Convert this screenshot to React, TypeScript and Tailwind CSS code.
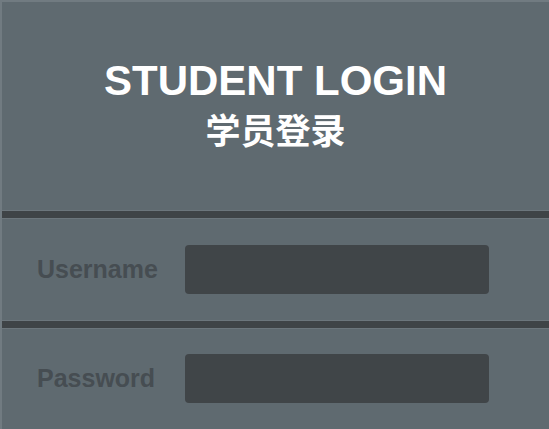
import { FC } from 'react';

const Divider: FC = () => (
  <div className="h-[9px] border-y border-[#6c767c] bg-[#3f4447]" />
);

interface FieldProps {
  label: string;
  type: string;
}

const Field: FC<FieldProps> = ({ label, type }) => (
  <div className="flex flex-1 items-center pl-[35px]">
    <label className="w-[148px] text-[25px] font-bold text-[#464d52]">{label}</label>
    <input
      type={type}
      className="h-[49px] w-[304px] rounded-[4px] bg-[#404548] outline-none"
    />
  </div>
);

export default function App() {
  return (
    <div
      className="flex h-[429px] w-[549px] flex-col border-l-2 border-t-2 border-[#717b81] bg-[#5f6a70]"
      style={{ fontFamily: '"Liberation Sans", Arial, "Noto Sans CJK SC", sans-serif' }}
    >
      <div className="flex h-[208px] flex-col items-center pt-[55px]">
        <h1 className="text-[42px] font-bold leading-[48px] text-white">STUDENT LOGIN</h1>
        <h2 className="mt-[7px] text-[35px] font-bold leading-[40px] text-white">学员登录</h2>
      </div>
      <Divider />
      <Field label="Username" type="text" />
      <Divider />
      <Field label="Password" type="password" />
    </div>
  );
}
